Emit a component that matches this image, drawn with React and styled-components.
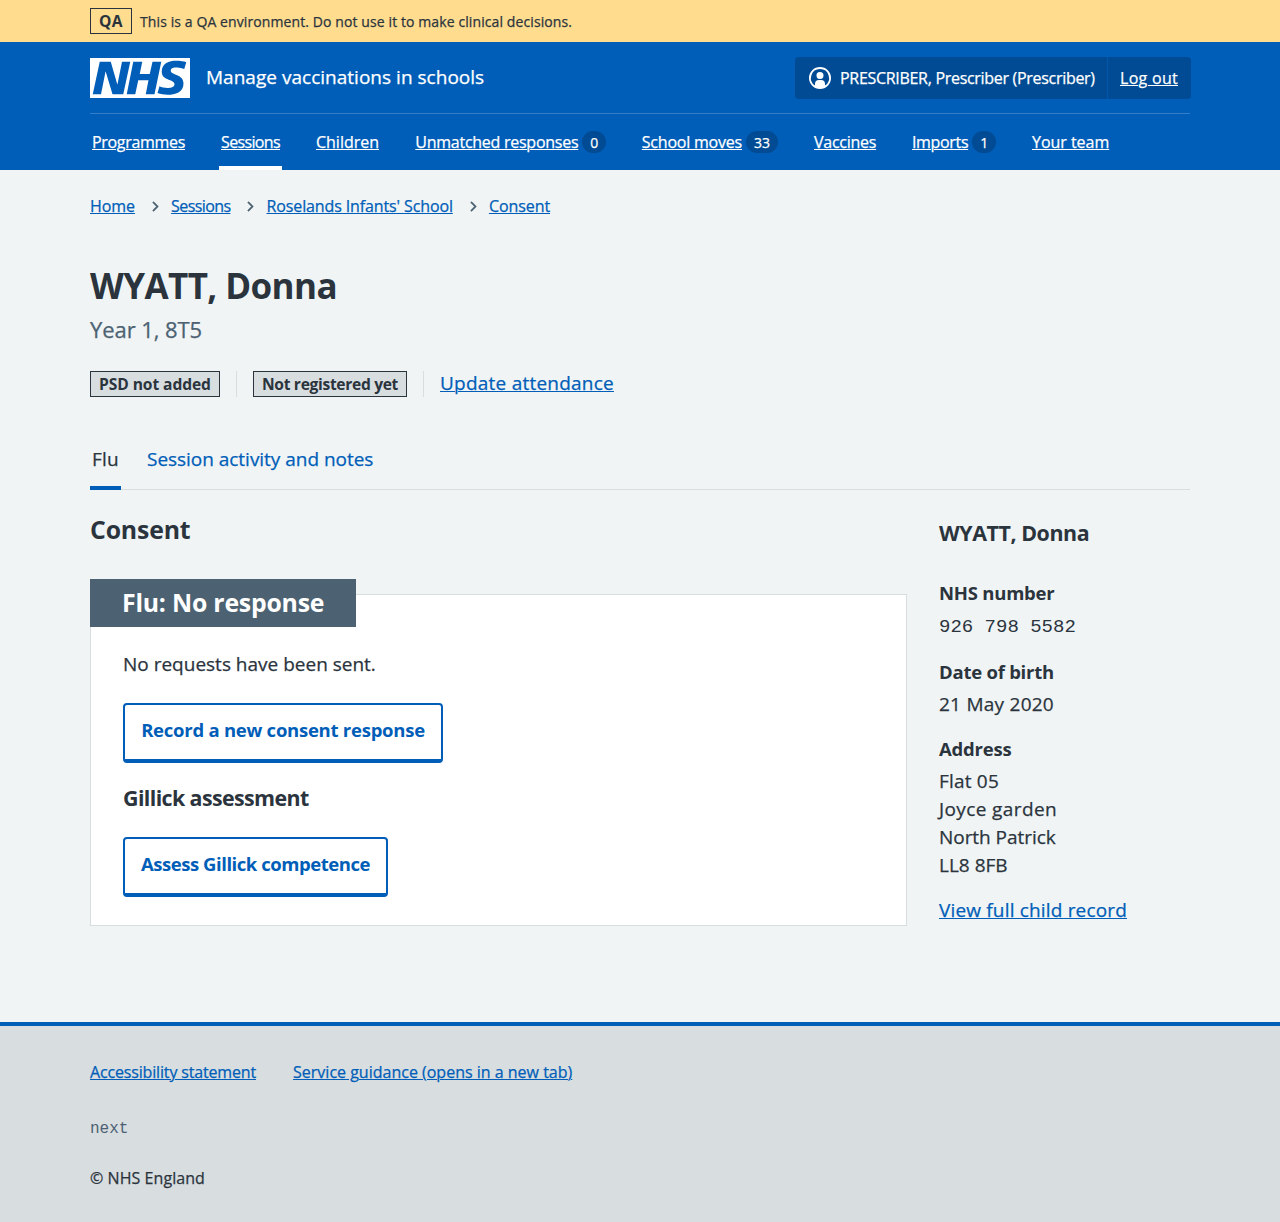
import React from "react";
import styled, { createGlobalStyle, css } from "styled-components";

const blue = "#005eb8";
const ink = "#2b343d";
const slate = "#4c6272";
const line = "#d8dde0";
const mono = `"Liberation Mono", monospace`;

const Global = createGlobalStyle`
  *, *::before, *::after { box-sizing: border-box; }
  body {
    margin: 0;
    background: #f0f4f5;
    color: ${ink};
    font: 400 19px/28px "Open Sans", Arial, sans-serif;
    -webkit-text-stroke: 0.25px currentColor;
  }
  h1, h2, h3, p, ul, ol, dl, dd { margin: 0; padding: 0; }
  ul, ol { list-style: none; }
  h1, h2, h3, dt, strong, button { -webkit-text-stroke: 0; }
`;

const underline = css`
  text-decoration: underline;
  text-decoration-thickness: 1px;
  text-underline-offset: 1px;
`;

/* Text run with its own tracking */
const T = styled.span`
  letter-spacing: ${(p) => p.$ls || 0}px;
  ${(p) => p.$u && underline}
`;

const Link = styled.a.attrs({ href: "#" })`
  color: ${blue};
  letter-spacing: ${(p) => p.$ls || 0}px;
  ${underline}
`;

const Container = styled.div`
  width: 1100px;
  margin: 0 auto;
`;

/* Environment banner */
const Banner = styled.div`
  height: 42px;
  background: #ffdc8e;
  font-size: 14px;
`;
const BannerRow = styled(Container)`
  display: flex;
  align-items: center;
  gap: 8px;
  height: 42px;
`;
const BannerText = styled.p`
  padding-top: 2px !important;
  letter-spacing: 0.1px;
`;
const Tag = styled.strong`
  height: 26px;
  padding: 0 8px;
  width: ${(p) => p.$w}px;
  border: 1px solid ${ink};
  background: ${(p) => p.$bg || "transparent"};
  font-size: 15.6px;
  font-weight: 700;
  line-height: 24px;
  white-space: nowrap;
`;

/* Header */
const Header = styled.header`
  background: ${blue};
  color: #fff;
`;
const HeaderTop = styled(Container)`
  display: flex;
  align-items: center;
  height: 72px;
  border-bottom: 1px solid #337ec6;
`;
const Logo = styled.svg`
  display: block;
  width: 100px;
  height: 40px;
  margin-right: 16px;
  background: ${blue};
`;
const Service = styled.span`
  padding-bottom: 2px;
  letter-spacing: 0.02px;
`;
const Account = styled.div`
  display: flex;
  align-items: stretch;
  height: 42px;
  margin: 0 -1px 0 auto;
  background: #004b93;
  border-radius: 4px;
  font-size: 16px;
  line-height: 42px;
`;
const User = styled.div`
  display: flex;
  align-items: center;
  gap: 8px;
  width: 313px;
  padding-left: 13px;
  border-right: 1px solid #0058ad;
  white-space: nowrap;
`;
const LogOut = styled.div`
  padding: 0 12px;
  width: 83px;
  white-space: nowrap;
`;
const Nav = styled.ul`
  display: flex;
  gap: 32px;
  width: 1100px;
  height: 56px;
  margin: 0 auto;
  font-size: 16px;
`;
const NavItem = styled.li`
  display: flex;
  align-items: center;
  gap: 4px;
  width: ${(p) => p.$w}px;
  padding: 4px 2px 0;
  border-bottom: 4px solid ${(p) => (p.$active ? "#fff" : "transparent")};
  white-space: nowrap;
`;
const Count = styled.span`
  height: 22px;
  padding: 0 8px;
  border-radius: 11px;
  background: #004b93;
  font-size: 14px;
  line-height: 23px;
`;

/* Page */
const Crumbs = styled.ol`
  display: flex;
  align-items: center;
  height: 28px;
  margin-top: 22px !important;
  font-size: 16px;
`;
const Crumb = styled.li`
  display: flex;
  align-items: center;
`;
const Chevron = styled.svg`
  width: 19px;
  height: 19px;
  margin: 0 6.2px 0 10.9px;
  fill: ${slate};
  stroke: ${slate};
  stroke-width: 0.5;
`;
const Title = styled.h1`
  margin-top: 39px !important;
  font-size: 35px;
  font-weight: 700;
  line-height: 54px;
`;
const Caption = styled.p`
  color: ${slate};
  font-size: 22px;
  line-height: 32px;
`;
const Status = styled.div`
  display: flex;
  align-items: center;
  height: 26px;
  margin-top: 26px;
`;
const StatusLink = styled.span`
  padding-bottom: 2px;
`;
const Divider = styled.span`
  width: 1px;
  height: 26px;
  margin: 0 16px;
  background: ${line};
`;
const Tabs = styled.ul`
  display: flex;
  gap: 24px;
  height: 60px;
  margin-top: 33px !important;
  box-shadow: inset 0 -1px ${line};
`;
const Tab = styled.li`
  height: 60px;
  padding: 15px 2px 0;
  width: ${(p) => (p.$active ? "31px" : "auto")};
  color: ${(p) => (p.$active ? ink : blue)};
  border-bottom: 4px solid ${(p) => (p.$active ? blue : "transparent")};
`;
const Columns = styled.div`
  display: grid;
  grid-template-columns: 817px 1fr;
  column-gap: 32px;
  height: 532px;
`;
const Main = styled.main`
  padding-top: 21px;
`;
const H2 = styled.h2`
  font-size: 24.8px;
  font-weight: 700;
  line-height: 36px;
`;
const Card = styled.section`
  height: 332px;
  margin-top: 47px;
  padding: 0 32px;
  background: #fff;
  border: 1px solid ${line};
`;
const CardLabel = styled.h3`
  width: 266px;
  height: 48px;
  margin: -16px 0 0 -33px !important;
  padding-left: 32px !important;
  background: ${slate};
  color: #fff;
  font-size: 24.8px;
  font-weight: 700;
  line-height: 47px;
`;
const CardText = styled.p`
  margin-top: 23px !important;
`;
const H4 = styled.h3`
  margin-top: 20px !important;
  font-size: 21.4px;
  font-weight: 700;
  line-height: 30px;
`;
const Button = styled.button`
  display: block;
  width: ${(p) => p.$w}px;
  height: 60px;
  margin-top: ${(p) => p.$mt}px;
  padding: 0 0 4px;
  border: 2px solid ${blue};
  border-bottom-width: 4px;
  border-radius: 4px;
  background: #fff;
  color: ${blue};
  font: 700 18.5px/28px "Open Sans", Arial, sans-serif;
  white-space: nowrap;
`;
const Aside = styled.aside`
  padding-top: 28px;
`;
const AsideTitle = styled.h2`
  font-size: 21.4px;
  font-weight: 700;
  line-height: 30px;
  margin-bottom: 31px !important;
`;
const Term = styled.dt`
  font-size: 18.5px;
  font-weight: 700;
  line-height: 28px;
  margin-bottom: 4px;
`;
const Detail = styled.dd`
  margin-bottom: 17px !important;
  line-height: 28px;
`;
const NhsNumber = styled.dd`
  padding-top: 2px !important;
  margin-bottom: 17px !important;
  line-height: 28px;
  font-family: ${mono};
  -webkit-text-stroke: 0;
`;

const Footer = styled.footer`
  height: 200px;
  padding-top: 32px;
  background: ${line};
  border-top: 4px solid ${blue};
  font-size: 16px;
`;
const FooterLinks = styled.div`
  display: flex;
  gap: 37px;
`;
const Version = styled.p`
  margin-top: 29px !important;
  color: ${slate};
  font-family: ${mono};
  -webkit-text-stroke: 0;
`;
const Copyright = styled.p`
  margin-top: 21px !important;
`;

const nav = [
  { label: "Programmes", ls: -0.31, w: 97 },
  { label: "Sessions", ls: -0.64, w: 63, active: true },
  { label: "Children", ls: -0.01, w: 67.3 },
  { label: "Unmatched responses", ls: -0.26, w: 194.5, count: 0 },
  { label: "School moves", ls: -0.21, w: 140.2, count: 33 },
  { label: "Vaccines", ls: -0.26, w: 66 },
  { label: "Imports", ls: -0.34, w: 88, count: 1 },
  { label: "Your team", ls: -0.03, w: 81 },
];

const crumbs = [
  ["Home", -0.05],
  ["Sessions", -0.6],
  ["Roselands Infants' School", -0.12],
  ["Consent", -0.07],
];

export default function App() {
  return (
    <>
      <Global />
      <Banner>
        <BannerRow>
          <Tag $w={42}>
            <T $ls={0.3}>QA</T>
          </Tag>
          <BannerText>This is a QA environment. Do not use it to make clinical decisions.</BannerText>
        </BannerRow>
      </Banner>
      <Header>
        <HeaderTop>
          <Logo viewBox="0 0 200 80" aria-label="NHS">
            <path
              fill="#fff"
              d="M200 0v80H0V0h200Zm-27.5 5.5c-14.5 0-29 5-29 22 0 10.2 7.7 13.5 14.7 16.3l.7.3c5.4 2 10.1 3.9 10.1 8.4 0 6.5-8.5 7.5-14 7.5s-12.5-1.5-16-3.5L135 70c5.5 2 13.5 3.5 20 3.5 15.5 0 32-4.5 32-22.5 0-19.5-25.5-16.5-25.5-25.5 0-5.5 5.5-6.5 12.5-6.5a35 35 0 0 1 14.5 3l4-13.5c-4.5-2-12-3-20-3Zm-131 2h-22l-14 65H22l9-45h.5l13.5 45h21.5l14-65H64l-9 45h-.5l-13-45Zm63 0h-18l-13 65h17l6-28H117l-5.5 28H129l13.5-65H125L119.5 32h-20l5-24.5Z"
            />
          </Logo>
          <Service>Manage vaccinations in schools</Service>
          <Account>
            <User>
              <svg width="24" height="24" viewBox="0 0 24 24" fill="#fff">
                <path d="M12 1a11 11 0 1 1 0 22 11 11 0 0 1 0-22Zm0 2a9 9 0 0 0-5 16.5V18a4 4 0 0 1 4-4h2a4 4 0 0 1 4 4v1.5A9 9 0 0 0 12 3Zm0 3a3.5 3.5 0 1 1-3.5 3.5A3.4 3.4 0 0 1 12 6Z" />
              </svg>
              <T $ls={-0.3}>PRESCRIBER, Prescriber (Prescriber)</T>
            </User>
            <LogOut>
              <T $u $ls={0.29}>Log out</T>
            </LogOut>
          </Account>
        </HeaderTop>
        <Nav>
          {nav.map((n) => (
            <NavItem key={n.label} $w={n.w} $active={n.active}>
              <T $u $ls={n.ls}>{n.label}</T>
              {n.count !== undefined && <Count>{n.count}</Count>}
            </NavItem>
          ))}
        </Nav>
      </Header>

      <Container>
        <Crumbs>
          {crumbs.map(([label, ls], i) => (
            <Crumb key={label}>
              {i > 0 && (
                <Chevron viewBox="0 0 24 24">
                  <path d="M15.5 12a1 1 0 0 1-.29.71l-5 5a1 1 0 0 1-1.42-1.42l4.3-4.29-4.3-4.29a1 1 0 0 1 1.42-1.42l5 5a1 1 0 0 1 .29.71z" />
                </Chevron>
              )}
              <Link $ls={ls}>{label}</Link>
            </Crumb>
          ))}
        </Crumbs>

        <Title>
          <T $ls={-0.6}>WYATT, Donna</T>
        </Title>
        <Caption>
          <T $ls={-0.08}>Year 1, 8T5</T>
        </Caption>
        <Status>
          <Tag $bg={line} $w={130}>
            <T $ls={-0.08}>PSD not added</T>
          </Tag>
          <Divider />
          <Tag $bg={line} $w={154}>
            <T $ls={-0.32}>Not registered yet</T>
          </Tag>
          <Divider />
          <StatusLink>
            <Link $ls={0.23}>Update attendance</Link>
          </StatusLink>
        </Status>

        <Tabs>
          <Tab $active>
            <T $ls={0.2}>Flu</T>
          </Tab>
          <Tab>
            <T $ls={-0.03}>Session activity and notes</T>
          </Tab>
        </Tabs>

        <Columns>
          <Main>
            <H2>
              <T $ls={-0.15}>Consent</T>
            </H2>
            <Card>
              <CardLabel>
                <T $ls={-0.2}>Flu: No response</T>
              </CardLabel>
              <CardText>No requests have been sent.</CardText>
              <Button $w={320} $mt={25}>
                <T $ls={-0.25}>Record a new consent response</T>
              </Button>
              <H4>
                <T $ls={-0.6}>Gillick assessment</T>
              </H4>
              <Button $w={265} $mt={24}>
                <T $ls={-0.46}>Assess Gillick competence</T>
              </Button>
            </Card>
          </Main>
          <Aside>
            <AsideTitle>
              <T $ls={-0.43}>WYATT, Donna</T>
            </AsideTitle>
            <dl>
              <Term>
                <T $ls={-0.23}>NHS number</T>
              </Term>
              <NhsNumber>926 798 5582</NhsNumber>
              <Term>
                <T $ls={-0.24}>Date of birth</T>
              </Term>
              <Detail>
                <T $ls={0.25}>21 May 2020</T>
              </Detail>
              <Term>
                <T $ls={-0.22}>Address</T>
              </Term>
              <Detail>
                <T $ls={0.2}>Flat 05</T>
                <br />
                <T $ls={0.39}>Joyce garden</T>
                <br />
                <T $ls={-0.05}>North Patrick</T>
                <br />
                <T>LL8 8FB</T>
              </Detail>
            </dl>
            <Link $ls={0.17}>View full child record</Link>
          </Aside>
        </Columns>
      </Container>

      <Footer>
        <Container>
          <FooterLinks>
            <Link $ls={-0.16}>Accessibility statement</Link>
            <Link>Service guidance (opens in a new tab)</Link>
          </FooterLinks>
          <Version>next</Version>
          <Copyright>
            <T $ls={0.06}>© NHS England</T>
          </Copyright>
        </Container>
      </Footer>
    </>
  );
}
